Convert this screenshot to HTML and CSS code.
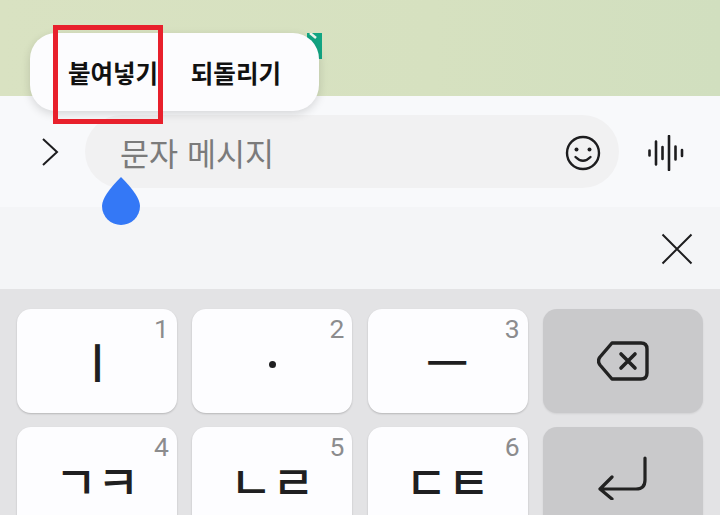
FILE: index.html
```html
<!DOCTYPE html>
<html lang="ko">

<head>
    <meta charset="UTF-8">
    <title>문자 메시지</title>
    <link rel="stylesheet" href="styles.css">
</head>

<body>
    <div class="chat-bg"></div>

    <div class="input-bar">
        <svg class="expand-icon" width="18" height="28" viewBox="0 0 18 28">
            <path d="M2 1 L16 14 L2 27" fill="none" stroke="#1d1d1f" stroke-width="2" />
        </svg>
        <div class="input-pill">
            <span class="placeholder">문자 메시지</span>
            <svg class="smile-icon" width="36" height="36" viewBox="0 0 36 36">
                <circle cx="18" cy="18" r="16" fill="none" stroke="#1d1d1f" stroke-width="2.4" />
                <circle cx="11.5" cy="14.5" r="2" fill="#1d1d1f" />
                <circle cx="24.5" cy="14.5" r="2" fill="#1d1d1f" />
                <path d="M10.5 22 Q18 29.5 25.500 22" fill="none" stroke="#1d1d1f" stroke-width="2.4" stroke-linecap="round" />
            </svg>
        </div>
        <svg class="voice-icon" width="36" height="36" viewBox="0 0 36 36">
            <path d="M1.500 15.500 V20.500 M8 6.500 V29.500 M14.500 12 V24 M21 1 V35 M27.500 11.500 V24.500 M34 15 V21" fill="none" stroke="#1d1d1f" stroke-width="2.600" stroke-linecap="round" />
        </svg>
    </div>

    <div class="toolbar">
        <svg width="32" height="32" viewBox="0 0 32 32">
            <path d="M1.500 1.500 L30.500 30.500 M30.500 1.500 L1.500 30.500" fill="none" stroke="#1d1d1f" stroke-width="2" />
        </svg>
    </div>

    <div class="keyboard">
        <div class="key"><span class="key-num">1</span><span class="jamo">ㅣ</span></div>
        <div class="key"><span class="key-num">2</span><span class="dot"></span></div>
        <div class="key"><span class="key-num">3</span><span class="jamo">ㅡ</span></div>
        <div class="key key-dark">
            <svg width="52" height="40" viewBox="0 0 52 40">
                <path d="M15 2 H44 Q50 2 50 8 V32 Q50 38 44 38 H15 L3 24 Q0 20 3 16 Z" fill="none" stroke="#222" stroke-width="3.400" stroke-linejoin="round" />
                <path d="M24 13 L38 27 M38 13 L24 27" fill="none" stroke="#222" stroke-width="3.600" stroke-linecap="round" />
            </svg>
        </div>
        <div class="key"><span class="key-num">4</span><span class="jamo-pair">ㄱㅋ</span></div>
        <div class="key"><span class="key-num">5</span><span class="jamo-pair">ㄴㄹ</span></div>
        <div class="key"><span class="key-num">6</span><span class="jamo-pair">ㄷㅌ</span></div>
        <div class="key key-dark">
            <svg class="enter-icon" width="50" height="44" viewBox="0 0 50 44">
                <path d="M47 2 V24 Q47 33 38 33 H3 M14 21 L2 33 L14 43" fill="none" stroke="#222" stroke-width="3.200" stroke-linecap="round" stroke-linejoin="round" />
            </svg>
        </div>
    </div>

    <!-- floating things -->
    <svg class="teal-mark" width="15" height="26" viewBox="0 0 15 26">
        <rect width="15" height="26" fill="#12a583" />
        <path d="M3 0 L9 5" fill="none" stroke="#eef6ee" stroke-width="2.500" />
    </svg>
    <div class="popup">
        <span class="popup-item">붙여넣기</span>
        <span class="popup-item">되돌리기</span>
    </div>
    <div class="highlight"></div>
    <svg class="cursor-drop" width="38" height="48" viewBox="0 0 38 48">
        <path d="M19 0 Q38 19 38 29 A19 19 0 0 1 0 29 Q0 19 19 0 Z" fill="#3478f6" />
    </svg>
</body>

</html>
```

FILE: styles.css
```css
html,
body {
    margin: 0;
    height: 515px;
    overflow: hidden;
}

body {
    position: relative;
    font-family: "Noto Sans CJK KR", "Noto Sans", sans-serif;
    background-color: #e3e3e5;
}

.chat-bg {
    height: 96px;
    background: linear-gradient(90deg, #d9e2c2, #d6e1c0 60%, #d1dfbf);
}

.input-bar {
    height: 111px;
    box-sizing: border-box;
    padding: 19px 34px 19px 41px;
    display: flex;
    align-items: center;
    background-color: #f8f9fb;
}

.expand-icon {
    flex: none;
    margin-right: 26px;
}

.input-pill {
    flex: none;
    width: 534px;
    height: 73px;
    box-sizing: border-box;
    padding: 0 18px 0 35px;
    display: flex;
    align-items: center;
    justify-content: space-between;
    background-color: #f1f1f2;
    border-radius: 37px;
}

.placeholder {
    font-size: 31.6px;
    color: #7b7b7b;
}

.smile-icon {
    margin-top: 2px;
}

.voice-icon {
    flex: none;
    margin-left: 29px;
    margin-top: 2px;
}

.toolbar {
    height: 82px;
    box-sizing: border-box;
    padding: 26px 27px 0 0;
    display: flex;
    justify-content: flex-end;
    align-items: flex-start;
    background-color: #f4f5f7;
}

.keyboard {
    padding: 20px 17px 0;
    display: grid;
    grid-template-columns: repeat(4, 160px);
    grid-auto-rows: 104px;
    column-gap: 15.33px;
    row-gap: 14px;
}

.key {
    position: relative;
    display: flex;
    align-items: center;
    justify-content: center;
    background-color: #fdfdff;
    border-radius: 14px;
    box-shadow: 0 1px 2px rgba(0, 0, 0, 0.2);
}

.key-dark {
    background-color: #c9c9cb;
    box-shadow: 0 1px 2px rgba(0, 0, 0, 0.08);
}

.key-num {
    position: absolute;
    top: 4px;
    right: 8px;
    font-family: Roboto, sans-serif;
    font-size: 26.500px;
    color: #8c8c8e;
}

.jamo {
    font-size: 42px;
    font-weight: 500;
    line-height: 1;
    color: #1f1f21;
    transform: scaleX(1.1);
}

.jamo-pair {
    font-size: 46px;
    font-weight: 500;
    line-height: 1;
    color: #1f1f21;
}

.dot {
    width: 7px;
    height: 7px;
    margin-top: 6px;
    margin-left: 1px;
    border-radius: 50%;
    background-color: #1f1f21;
}

.enter-icon {
    margin-top: -2px;
}

.popup {
    position: absolute;
    left: 30px;
    top: 33px;
    width: 289px;
    height: 78px;
    box-sizing: border-box;
    padding: 0 38px;
    display: flex;
    align-items: center;
    justify-content: space-between;
    background-color: #fcfcfe;
    border-radius: 26px;
    box-shadow: 0 3px 10px rgba(0, 0, 0, 0.14);
}

.popup-item {
    font-size: 24.500px;
    font-weight: 700;
    color: #111;
}

.teal-mark {
    position: absolute;
    left: 307px;
    top: 33px;
}

.highlight {
    position: absolute;
    left: 53px;
    top: 25px;
    width: 110px;
    height: 99px;
    box-sizing: border-box;
    border: 5px solid #e8202c;
}

.cursor-drop {
    position: absolute;
    left: 102px;
    top: 177px;
}
```
